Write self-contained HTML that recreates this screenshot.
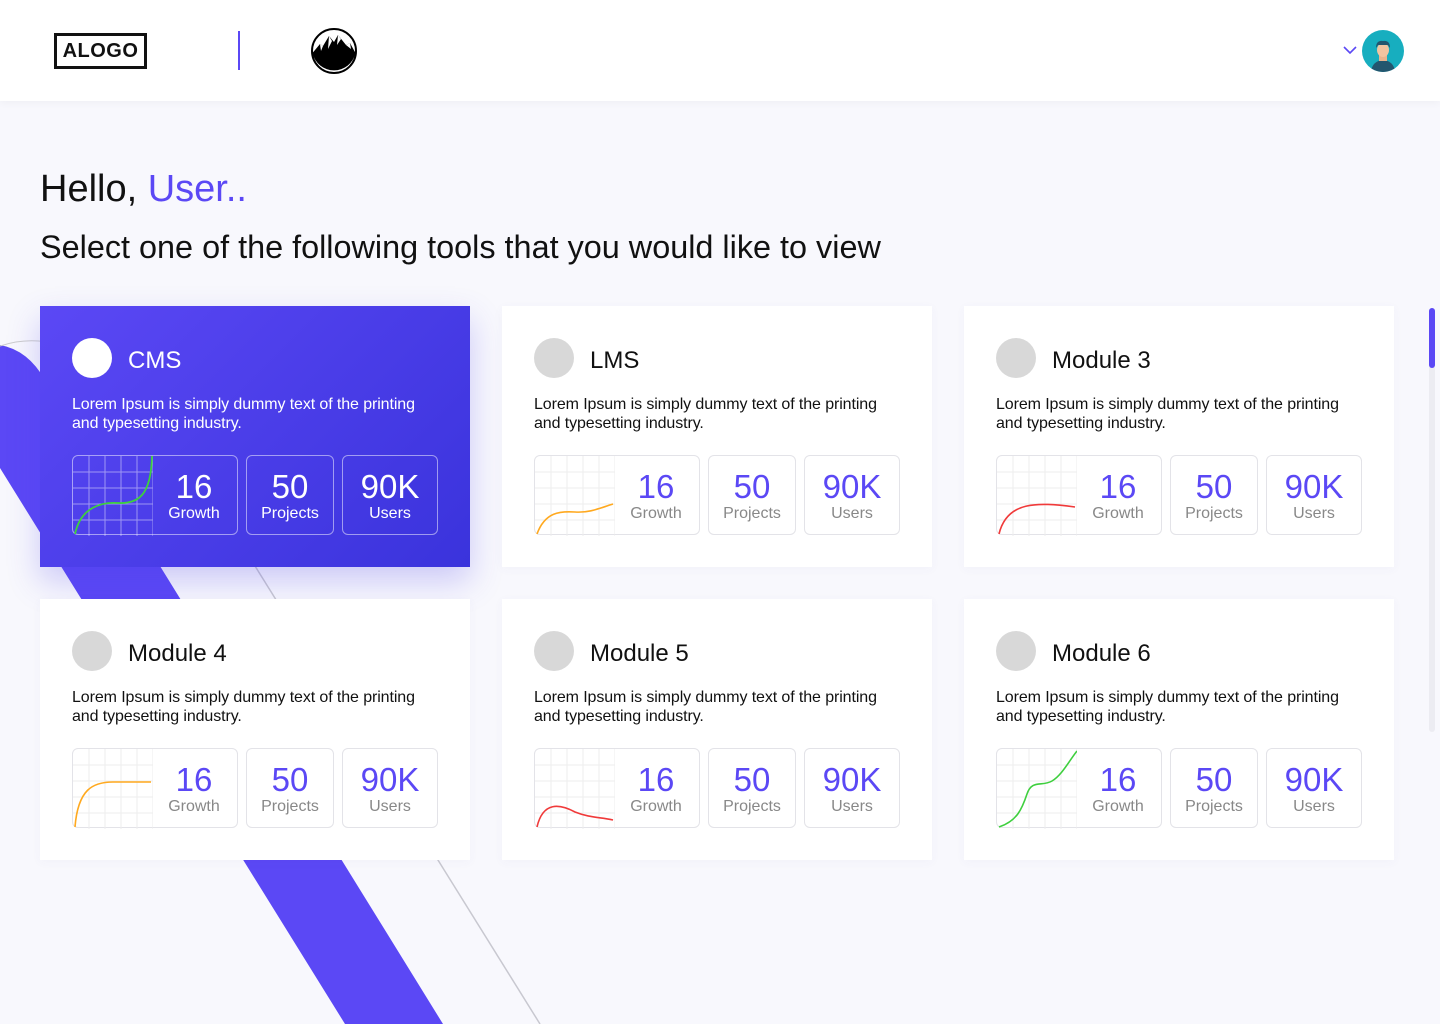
<!DOCTYPE html>
<html><head><meta charset="utf-8"><style>
*{margin:0;padding:0;box-sizing:border-box}
body{width:1440px;height:1024px;overflow:hidden;background:#f8f8fd;font-family:"Liberation Sans",sans-serif;position:relative;color:#111}
.hdr{position:absolute;left:0;top:0;width:1440px;height:101px;background:#fff;box-shadow:0 2px 8px rgba(0,0,0,.04)}
.logo{position:absolute;left:54px;top:33px;width:93px;height:36px;border:3px solid #111;font-weight:bold;font-size:20px;line-height:30px;text-align:center;letter-spacing:.5px}
.vl{position:absolute;left:238px;top:31px;width:1.5px;height:39px;background:#5b48f5}
.bg{position:absolute;left:0;top:0}
h1{position:absolute;left:40px;top:168px;font-weight:normal;font-size:38px;color:#111}
h1 span{color:#5b48f5}
h2{position:absolute;left:40px;top:229px;font-weight:normal;font-size:32.4px;color:#111}
.card{position:absolute;width:430px;height:261px;background:#fff;box-shadow:0 2px 10px rgba(80,80,160,.04)}
.card.act{background:linear-gradient(135deg,#5b48f5,#3a33dc);box-shadow:0 14px 30px rgba(70,60,230,.25);color:#fff}
.dot{position:absolute;left:32px;top:32px;width:40px;height:40px;border-radius:50%;background:#d8d8d8}
.act .dot{background:#fff}
.tt{position:absolute;left:88px;top:41px;font-size:24px}
.ds{position:absolute;left:32px;top:89px;font-size:16px;line-height:19px;width:370px;letter-spacing:-.1px}
.b{position:absolute;top:149px;height:80px;border:1px solid #e3e3e8;border-radius:6px;text-align:center}
.act .b{border-color:rgba(255,255,255,.5)}
.b .n{font-size:33px;color:#5b48f5;line-height:34px;margin-top:14px}
.act .b .n{color:#fff}
.b .l{font-size:16px;color:#888;margin-top:1px}
.act .b .l{color:#fff}
.g{left:32px;width:166px}
.g svg{position:absolute;left:0;top:0}
.g .t{position:absolute;left:78px;width:86px;top:0}
.p{left:206px;width:88px}
.u{left:302px;width:96px}
</style></head><body>
<svg class="bg" width="1440" height="1024">
<path d="M0,345 Q28,350 45,380 L443,1024 L345,1024 L0,468 Z" fill="#5b48f5"/>
<path d="M0,346 Q30,336 60,345" stroke="#ccc" fill="none"/>
<line x1="255" y1="566" x2="540" y2="1024" stroke="#c8c8d0" stroke-width="1.5"/>
<rect x="1429" y="308" width="6" height="424" rx="3" fill="#ececf2"/>
<rect x="1429" y="308" width="6" height="60" rx="3" fill="#5b48f5"/>
</svg>
<div class="hdr">
<div class="logo">ALOGO</div>
<div class="vl"></div>
<svg style="position:absolute;left:310px;top:27px" width="48" height="48" viewBox="0 0 48 48"><circle cx="24" cy="24" r="22" fill="#fff" stroke="#000" stroke-width="2"/><path d="M2.5,26 L10,17 L13,19 L19,9 L24,15 L28,8 L36,18 L40,16 L45.5,26 A22,22 0 0 1 2.5,26Z" fill="#000"/><path d="M10,17 L13,19 L11,24Z M19,9 L22,14 L18,22Z M28,8 L31,12 L27,18Z M36,18 L40,16 L41,22Z" fill="#fff"/></svg>
<svg style="position:absolute;left:1343px;top:45px" width="14" height="10"><path d="M1,2 L7,8 L13,2" stroke="#5b48f5" stroke-width="1.6" fill="none"/></svg>
<svg style="position:absolute;left:1362px;top:30px" width="42" height="42" viewBox="0 0 42 42"><circle cx="21" cy="21" r="21" fill="#17aebf"/><clipPath id="c"><circle cx="21" cy="21" r="21"/></clipPath><g clip-path="url(#c)"><path d="M9,42 Q10,31 21,30 Q32,31 33,42Z" fill="#23566e"/><rect x="17" y="24" width="8" height="7" fill="#e8b48e"/><ellipse cx="21" cy="20" rx="6" ry="7" fill="#f2c4a0"/><path d="M14,18 Q14,10 21,11 Q28,10 28,18 L26,15 L16,15Z" fill="#23566e"/></g></svg>
</div>
<h1>Hello, <span>User..</span></h1>
<h2>Select one of the following tools that you would like to view</h2>

<div class="card act" style="left:40px;top:306px"><div class="dot"></div><div class="tt">CMS</div><div class="ds">Lorem Ipsum is simply dummy text of the printing and typesetting industry.</div>
<div class="b g"><svg width="80" height="80"><g stroke="rgba(255,255,255,.45)" stroke-width="1"><path d="M16,0V80M32,0V80M48,0V80M64,0V80M80,0V80M0,16H80M0,32H80M0,48H80M0,64H80"/></g><path d="M2,78 C8,50 30,46 45,47 C65,48 78,40 79,0" stroke="#3ecf3e" stroke-width="1.8" fill="none"/></svg><div class="t"><div class="n">16</div><div class="l">Growth</div></div></div>
<div class="b p"><div class="n">50</div><div class="l">Projects</div></div><div class="b u"><div class="n">90K</div><div class="l">Users</div></div></div>

<div class="card" style="left:502px;top:306px"><div class="dot"></div><div class="tt">LMS</div><div class="ds">Lorem Ipsum is simply dummy text of the printing and typesetting industry.</div>
<div class="b g"><svg width="80" height="80"><g stroke="#eee"><path d="M16,0V80M32,0V80M48,0V80M64,0V80M80,0V80M0,16H80M0,32H80M0,48H80M0,64H80"/></g><path d="M2,78 C10,56 25,55 40,56 C55,57 65,52 78,48" stroke="#ffa91f" stroke-width="1.6" fill="none"/></svg><div class="t"><div class="n">16</div><div class="l">Growth</div></div></div>
<div class="b p"><div class="n">50</div><div class="l">Projects</div></div><div class="b u"><div class="n">90K</div><div class="l">Users</div></div></div>

<div class="card" style="left:964px;top:306px"><div class="dot"></div><div class="tt">Module 3</div><div class="ds">Lorem Ipsum is simply dummy text of the printing and typesetting industry.</div>
<div class="b g"><svg width="80" height="80"><g stroke="#eee"><path d="M16,0V80M32,0V80M48,0V80M64,0V80M80,0V80M0,16H80M0,32H80M0,48H80M0,64H80"/></g><path d="M2,78 C10,45 40,46 78,51" stroke="#f03a3a" stroke-width="1.6" fill="none"/></svg><div class="t"><div class="n">16</div><div class="l">Growth</div></div></div>
<div class="b p"><div class="n">50</div><div class="l">Projects</div></div><div class="b u"><div class="n">90K</div><div class="l">Users</div></div></div>

<div class="card" style="left:40px;top:599px"><div class="dot"></div><div class="tt">Module 4</div><div class="ds">Lorem Ipsum is simply dummy text of the printing and typesetting industry.</div>
<div class="b g"><svg width="80" height="80"><g stroke="#eee"><path d="M16,0V80M32,0V80M48,0V80M64,0V80M80,0V80M0,16H80M0,32H80M0,48H80M0,64H80"/></g><path d="M2,78 C5,40 20,33 40,33 L78,33" stroke="#ffa91f" stroke-width="1.6" fill="none"/></svg><div class="t"><div class="n">16</div><div class="l">Growth</div></div></div>
<div class="b p"><div class="n">50</div><div class="l">Projects</div></div><div class="b u"><div class="n">90K</div><div class="l">Users</div></div></div>

<div class="card" style="left:502px;top:599px"><div class="dot"></div><div class="tt">Module 5</div><div class="ds">Lorem Ipsum is simply dummy text of the printing and typesetting industry.</div>
<div class="b g"><svg width="80" height="80"><g stroke="#eee"><path d="M16,0V80M32,0V80M48,0V80M64,0V80M80,0V80M0,16H80M0,32H80M0,48H80M0,64H80"/></g><path d="M2,78 C8,52 25,55 40,63 C55,69 65,68 78,71" stroke="#f03a3a" stroke-width="1.6" fill="none"/></svg><div class="t"><div class="n">16</div><div class="l">Growth</div></div></div>
<div class="b p"><div class="n">50</div><div class="l">Projects</div></div><div class="b u"><div class="n">90K</div><div class="l">Users</div></div></div>

<div class="card" style="left:964px;top:599px"><div class="dot"></div><div class="tt">Module 6</div><div class="ds">Lorem Ipsum is simply dummy text of the printing and typesetting industry.</div>
<div class="b g"><svg width="80" height="80"><g stroke="#eee"><path d="M16,0V80M32,0V80M48,0V80M64,0V80M80,0V80M0,16H80M0,32H80M0,48H80M0,64H80"/></g><path d="M2,78 C20,72 25,60 30,45 C35,30 45,38 55,32 C65,26 72,12 80,2" stroke="#3ecf3e" stroke-width="1.6" fill="none"/></svg><div class="t"><div class="n">16</div><div class="l">Growth</div></div></div>
<div class="b p"><div class="n">50</div><div class="l">Projects</div></div><div class="b u"><div class="n">90K</div><div class="l">Users</div></div></div>
</body></html>
